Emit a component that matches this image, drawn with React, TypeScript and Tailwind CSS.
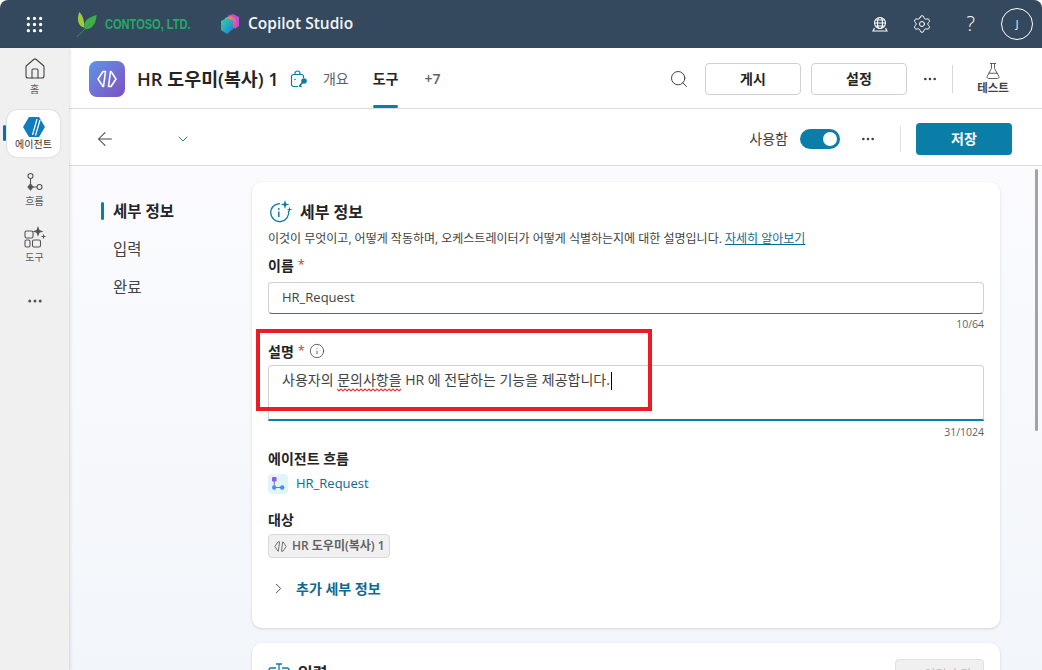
import React from 'react';
import { ArrowLeft, ChevronDown, ChevronRight, Ellipsis, FlaskConical, Grip, Home, Info, Plus, Search, Settings } from 'lucide-react';

const FONT = '[font-family:"Open_Sans","Noto_Sans_CJK_KR",sans-serif]';

const AgentGlyph: React.FC<{ size: number; color: string; width?: number }> = ({ size, color, width = 1.6 }) => (
    <svg width={size} height={size} viewBox="0 0 24 24" fill="none" stroke={color} strokeWidth={width} strokeLinejoin="round">
        <path d="M10.500 4.500H8L3 12l5 7.500h.5z" />
        <path d="M13.500 19.500H16l5-7.500-5-7.500h-.5z" />
    </svg>
);

const LeafLogo = () => (
    <svg width="22" height="25" viewBox="0 0 22 26">
        <path d="M3 0c-2 5-2 11 1 14 1 1 3 2 4 2 .5-6-1-12-5-16z" fill="#9ccc3c" />
        <path d="M21 3C14 5 8.500 8 8 14c-.2 2 .5 3 1 4 8 0 11.500-7 12-15z" fill="#3fae49" />
        <path d="M0 26c4-3 9-8 14-14" stroke="#2f9e44" strokeWidth="1" fill="none" />
    </svg>
);

const StudioLogo = () => (
    <svg width="18" height="20" viewBox="0 0 18 20">
        <defs>
            <linearGradient id="sg1" x1="0" y1="0" x2="1" y2="1">
                <stop offset="0" stopColor="#f0a03c" />
                <stop offset="1" stopColor="#e63fa0" />
            </linearGradient>
            <linearGradient id="sg2" x1="0" y1="0" x2="1" y2="1">
                <stop offset="0" stopColor="#34d8a0" />
                <stop offset="1" stopColor="#1e78e0" />
            </linearGradient>
        </defs>
        <path d="M6 2l6-2 6 3v9l-4 3V6z" fill="#c44ad8" />
        <path d="M4 4l6-2 5 3v8l-5 3-6-3z" fill="url(#sg1)" />
        <path d="M0 7l6-3 6 3v8l-6 5-6-4z" fill="url(#sg2)" />
    </svg>
);

const HubIcon = () => (
    <svg width="18" height="18" viewBox="0 0 18 18" fill="none" stroke="#fff" strokeWidth="1.100">
        <circle cx="9" cy="8" r="5.500" />
        <ellipse cx="9" cy="8" rx="2.500" ry="5.500" />
        <path d="M3.500 8h11M4.500 5h9M4.500 11h9" />
        <path d="M3.500 13 2 16h14l-1.500-3" />
    </svg>
);

const CopilotKey = () => (
    <svg width="18" height="18" viewBox="0 0 18 18" fill="none" stroke="#0b7ea8" strokeWidth="1.200">
        <path d="M5 4.500V3.500a2.500 2.500 0 0 1 5 0v1" />
        <path d="M8 16.500H3.500A2 2 0 0 1 1.500 14.500V6.500a2 2 0 0 1 2-2h8a2 2 0 0 1 2 2v1.500" />
        <circle cx="5" cy="9.500" r=".8" fill="#0b7ea8" stroke="none" />
        <circle cx="14" cy="11" r="2.800" fill="#0b7ea8" stroke="none" />
        <path d="M12.500 12.500 9 16.500M10 15.500l1.500 1.500" strokeWidth="1.600" />
    </svg>
);

const FlowIcon = () => (
    <svg width="20" height="22" viewBox="0 0 20 22" fill="none" stroke="#555" strokeWidth="1.100">
        <rect x="3" y="1.500" width="5" height="5" rx="2.500" />
        <path d="M5.500 6.500v6M8 15h4" />
        <path d="M5.500 12l2.500 3-2.500 3L3 15z" fill="#555" />
        <circle cx="14.500" cy="15" r="2.500" />
    </svg>
);

const ToolsIcon = () => (
    <svg width="24" height="22" viewBox="0 0 24 22" fill="none" stroke="#555" strokeWidth="1.100">
        <rect x="2" y="5" width="8" height="7" rx="1.500" />
        <rect x="2" y="14" width="5" height="7" rx="1.500" />
        <rect x="9.500" y="14" width="8" height="7" rx="1.500" />
        <path d="M15 0l1.600 4.400L21 6l-4.400 1.600L15 12l-1.600-4.400L9 6l4.400-1.600z" fill="#555" stroke="none" transform="translate(1.500 0) scale(.9)" />
        <path d="M20.500 8.500v4M18.500 10.500h4" />
    </svg>
);

const SparkInfo = () => (
    <svg width="24" height="24" viewBox="0 0 24 24" fill="none" stroke="#0b7ea8" strokeWidth="1.300">
        <path d="M12 3.600a9 9 0 1 0 8.500 7" />
        <circle cx="10.800" cy="9" r=".9" fill="#0b7ea8" stroke="none" />
        <path d="M10.800 11.500v5.500" strokeWidth="1.500" />
        <path d="M17 0l1.100 3.400L21.500 4.500l-3.400 1.100L17 9l-1.100-3.400L12.500 4.500l3.400-1.100z" fill="#0b7ea8" stroke="none" />
        <path d="M21.500 7.500v4M19.500 9.500h4" strokeWidth="1" />
    </svg>
);

const MiniFlow = () => (
    <svg width="14" height="14" viewBox="0 0 14 14">
        <rect x="1" y="0" width="4.500" height="4.500" rx="1" fill="#8a5ce0" />
        <path d="M3.200 4v6.500h8" stroke="#6b78e0" strokeWidth="1" fill="none" />
        <circle cx="3.200" cy="10.500" r="2.200" fill="#4f8ef0" />
        <circle cx="11.200" cy="10.500" r="2.200" fill="#3a94f0" />
    </svg>
);

const InputIcon = () => (
    <svg width="22" height="22" viewBox="0 0 22 22" fill="none" stroke="#0b7ea8" strokeWidth="1.300">
        <path d="M8 6H3a2 2 0 0 0-2 2v6a2 2 0 0 0 2 2h5M14 6h5a2 2 0 0 1 2 2v6a2 2 0 0 1-2 2h-5" />
        <path d="M11 2v18M8 2h6M8 20h6" />
    </svg>
);

const Squiggle = () => (
    <svg className="absolute left-0 top-[18px]" width="64" height="4" viewBox="0 0 64 4" fill="none" stroke="#e23b3b" strokeWidth="1.200">
        <path d="M0 1 2 3 4 1 6 3 8 1 10 3 12 1 14 3 16 1 18 3 20 1 22 3 24 1 26 3 28 1 30 3 32 1 34 3 36 1 38 3 40 1 42 3 44 1 46 3 48 1 50 3 52 1 54 3 56 1 58 3 60 1 62 3 64 1" />
    </svg>
);

const NavItem: React.FC<{ label: string; icon: React.ReactNode; className?: string; labelClass?: string }> = ({ label, icon, className, labelClass }) => (
    <div className={`flex flex-col items-center ${className ?? ''}`}>
        {icon}
        <span className={`text-[10px] leading-[14px] text-[#5b5b5b] ${labelClass ?? ''}`}>{label}</span>
    </div>
);

const Label: React.FC<{ text: string; required?: boolean; children?: React.ReactNode }> = ({ text, required, children }) => (
    <div className="flex h-5 items-center gap-1 text-[14px] font-semibold text-[#242424]">
        {text}
        {required && <span className="text-[13px] font-normal text-[#d13438]">*</span>}
        {children}
    </div>
);

const App: React.FC = () => {
    return (
        <div className={`relative flex h-screen w-full flex-col overflow-hidden rounded-t-lg bg-white ${FONT}`}>
            {/* top bar */}
            <header className="flex h-12 shrink-0 items-center bg-[#34495e] text-white">
                <div className="flex w-[68px] justify-center">
                    <Grip size={21} strokeWidth={1.8} />
                </div>
                <div className="ml-[8px] flex items-center gap-[7px]">
                    <LeafLogo />
                    <span className="w-[91px] origin-left scale-x-[0.79] whitespace-nowrap [font-family:'Liberation_Sans',sans-serif] text-[14px] font-bold text-[#25a868]">CONTOSO, LTD.</span>
                </div>
                <div className="ml-[25px] flex items-center gap-[9px]">
                    <StudioLogo />
                    <span className="text-[15.500px] font-semibold text-[#f4f6f8]">Copilot Studio</span>
                </div>
                <div className="ml-auto flex items-center pr-[9px]">
                    <HubIcon />
                    <Settings size={20} strokeWidth={1.2} className="ml-[23px]" />
                    <span className="ml-[35px] text-[20px] font-light leading-none">?</span>
                    <div className="ml-[26px] flex size-8 items-center justify-center rounded-full border border-white text-[10px]">J</div>
                </div>
            </header>

            <div className="flex min-h-0 flex-1">
                {/* left rail */}
                <aside className="z-10 flex w-[69px] shrink-0 flex-col items-center bg-[#f0f0f0] pt-[9px] shadow-[1px_0_3px_rgba(0,0,0,0.15)]">
                    <NavItem label="홈" icon={<Home size={24} strokeWidth={1.1} className="text-[#444]" />} labelClass="mt-px" />
                    <div className="relative mr-[2px] mt-[14px] flex h-[47px] w-[53px] flex-col items-center justify-center rounded-[10px] bg-white shadow-[0_0_2px_rgba(0,0,0,0.2)]">
                        <span className="absolute -left-[4px] top-[15px] h-4 w-[3px] rounded bg-[#0b6fa8]" />
                        <svg width="22" height="20" viewBox="0 0 22 20">
                            <path d="M6 0h10l6 10-6 10H6L0 10z" fill="#0f7cc0" />
                            <path d="M9.500 18 14 2M12.500 18.500 17 3" stroke="#fff" strokeWidth="1.200" />
                        </svg>
                        <span className="text-[10px] leading-[14px] text-[#333]">에이전트</span>
                    </div>
                    <NavItem label="흐름" className="mt-[15px]" icon={<FlowIcon />} />
                    <NavItem label="도구" className="mt-[18px]" icon={<ToolsIcon />} labelClass="mt-[2px]" />
                    <Ellipsis size={18} className="mt-[28px] text-[#555]" />
                </aside>

                <main className="flex min-w-0 flex-1 flex-col">
                    {/* agent bar */}
                    <div className="flex h-[61px] shrink-0 items-center border-b border-[#dcdcdc] pl-5 pr-[21px] pt-[2px]">
                        <div className="flex size-9 items-center justify-center rounded-[8px] bg-gradient-to-br from-[#5a93ea] to-[#7a4fc0]">
                            <AgentGlyph size={24} color="#fff" />
                        </div>
                        <span className="ml-3 text-[18.400px] font-semibold text-[#242424]">HR 도우미(복사) 1</span>
                        <span className="ml-[11px]"><CopilotKey /></span>
                        <span className="ml-[15px] pb-[2px] text-[14px] text-[#616161]">개요</span>
                        <div className="relative ml-[24px] flex h-full items-center">
                            <span className="pb-[2px] text-[14px] font-bold text-[#242424]">도구</span>
                            <span className="absolute bottom-0 left-0 right-0 h-[3px] rounded bg-[#0b7ea8]" />
                        </div>
                        <span className="ml-[26px] pb-[2px] text-[14px] font-semibold text-[#616161]">+7</span>
                        <div className="ml-auto flex items-center">
                            <Search size={20} strokeWidth={1.2} className="text-[#424242]" />
                            <button className="ml-[16px] h-8 w-24 rounded border border-[#d1d1d1] pb-[2px] text-[14px] font-bold text-[#242424]">게시</button>
                            <button className="ml-[10px] h-8 w-24 rounded border border-[#d1d1d1] pb-[2px] text-[14px] font-bold text-[#242424]">설정</button>
                            <Ellipsis size={16} className="ml-[15px] text-[#424242]" />
                            <span className="ml-[14px] h-7 w-px bg-[#d9d9d9]" />
                            <div className="ml-[12px] flex w-[56px] flex-col items-center">
                                <FlaskConical size={18} strokeWidth={1.1} className="text-[#424242]" />
                                <span className="text-[11.500px] font-semibold leading-[16px] text-[#424242]">테스트</span>
                            </div>
                        </div>
                    </div>

                    {/* action bar */}
                    <div className="flex h-[57px] shrink-0 items-center border-b border-[#dcdcdc] pl-[25px] pr-[30px] pt-[4px]">
                        <ArrowLeft size={22} strokeWidth={1.1} className="text-[#424242]" />
                        <ChevronDown size={16} strokeWidth={1.3} className="ml-[59px] text-[#1f5f8f]" />
                        <div className="ml-auto flex items-center">
                            <span className="pb-px text-[14px] text-[#424242]">사용함</span>
                            <span className="ml-[12px] flex h-5 w-10 items-center justify-end rounded-full bg-[#0b7ea8] pr-[3px]">
                                <span className="size-[14px] rounded-full bg-white" />
                            </span>
                            <Ellipsis size={16} className="ml-[20px] text-[#424242]" />
                            <span className="ml-[24px] h-[26px] w-px bg-[#e0e0e0]" />
                            <button className="ml-[15px] h-8 w-24 rounded bg-[#0b7ea8] pb-[2px] text-[14px] font-bold text-white">저장</button>
                        </div>
                    </div>

                    {/* content */}
                    <div className="relative flex min-h-0 flex-1 overflow-hidden bg-gradient-to-b from-[#fbfbfe] to-[#f2f6fa] pl-[32px] pt-4">
                        <nav className="flex w-[151px] shrink-0 flex-col gap-[18px] pt-[19px] text-[15.500px] leading-[20px] text-[#424242]">
                            <div className="relative pl-3 font-bold text-[#242424]">
                                <span className="absolute left-0 top-px h-[18px] w-[3px] rounded bg-[#0b7ea8]" />
                                세부 정보
                            </div>
                            <div className="pl-3">입력</div>
                            <div className="pl-3">완료</div>
                        </nav>

                        <div className="flex w-[748px] shrink-0 flex-col gap-[15px]">
                            <section className="h-[446px] shrink-0 rounded-[10px] bg-white px-4 pt-[17px] shadow-[0_1px_3px_rgba(0,0,0,0.14)]">
                                <div className="flex h-[26px] items-center gap-2">
                                    <SparkInfo />
                                    <h2 className="text-[16px] font-bold text-[#242424]">세부 정보</h2>
                                </div>
                                <p className="mt-[5px] text-[12px] leading-[18px] text-[#424242]">
                                    이것이 무엇이고, 어떻게 작동하며, 오케스트레이터가 어떻게 식별하는지에 대한 설명입니다. <span className="text-[#0b6a8f] underline">자세히 알아보기</span>
                                </p>
                                <div className="mt-[7px]"><Label text="이름" required /></div>
                                <div className="mt-[7px] flex h-8 items-center rounded border border-[#d1d1d1] border-b-[#616161] px-[13px] text-[13px] text-[#424242]">HR_Request</div>
                                <div className="mt-1 text-right text-[10.500px] leading-[12px] text-[#616161]">10/64</div>
                                <div className="mt-[11px]">
                                    <Label text="설명" required>
                                        <Info size={16} strokeWidth={1.200} className="text-[#424242]" />
                                    </Label>
                                </div>
                                <div className="mt-1 h-14 rounded-t border border-b-2 border-[#d1d1d1] border-b-[#0b7ea8] px-[13px] pt-[4px] text-[14px] leading-[20px] text-[#424242]">
                                    사용자의 <span className="relative">문의사항을<Squiggle /></span> HR 에 전달하는 기능을 제공합니다.<span className="ml-px inline-block h-[18px] w-px bg-black align-middle" />
                                </div>
                                <div className="mt-[5px] text-right text-[10.500px] leading-[12px] text-[#616161]">31/1024</div>
                                <div className="mt-[10px]"><Label text="에이전트 흐름" /></div>
                                <div className="mt-[6px] flex items-center gap-2">
                                    <span className="flex size-5 items-center justify-center rounded bg-[#e3f3fa]"><MiniFlow /></span>
                                    <span className="text-[13px] text-[#0b6a8f]">HR_Request</span>
                                </div>
                                <div className="mt-[15px]"><Label text="대상" /></div>
                                <div className="mt-[5px] flex h-6 w-fit items-center gap-[4px] rounded border border-[#d9d9d9] bg-[#f0f0f0] px-1 text-[12px] font-semibold text-[#616161]">
                                    <AgentGlyph size={15} color="#616161" width={1.400} />
                                    HR 도우미(복사) 1
                                </div>
                                <div className="mt-5 flex items-center gap-[9px] pl-[2px]">
                                    <ChevronRight size={17} strokeWidth={1.300} className="text-[#424242]" />
                                    <span className="text-[14px] font-bold text-[#0b6a8f]">추가 세부 정보</span>
                                </div>
                            </section>

                            <section className="h-[120px] shrink-0 rounded-[10px] bg-white px-4 pt-4 shadow-[0_1px_3px_rgba(0,0,0,0.14)]">
                                <div className="flex items-start justify-between">
                                    <div className="flex items-center gap-2 pt-[2px]">
                                        <InputIcon />
                                        <h2 className="text-[16px] font-bold text-[#242424]">입력</h2>
                                    </div>
                                    <button className="flex h-8 w-[89px] items-center justify-center gap-1 rounded border border-[#e0e0e0] bg-[#f0f0f0] text-[12px] text-[#bdbdbd]">
                                        <Plus size={13} /> 입력 추가
                                    </button>
                                </div>
                            </section>
                        </div>

                        {/* scrollbar */}
                        <span className="absolute right-[4px] top-[3px] h-[262px] w-[3px] rounded-full bg-[#a3a3a3]" />
                    </div>
                </main>
            </div>

            {/* red annotation */}
            <div className="pointer-events-none absolute left-[256px] top-[329px] h-[82px] w-[396px] border-[4px] border-[#ed1c24]" />
        </div>
    );
};

export default App;
